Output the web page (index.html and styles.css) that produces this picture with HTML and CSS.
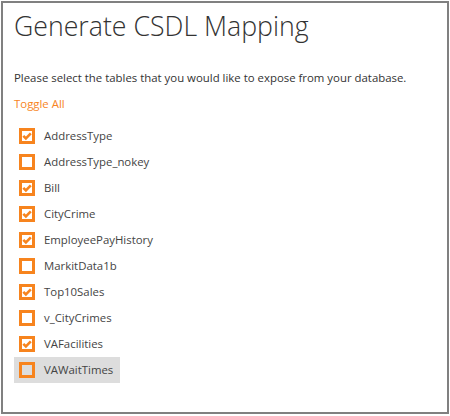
FILE: index.html
```html
<!DOCTYPE html>
<html>
<head>
<meta charset="utf-8">
<link rel="stylesheet" href="styles.css">
</head>
<body>
<div class="panel">
  <h1 class="title">Generate CSDL Mapping</h1>
  <p class="desc">Please select the tables that you would like to expose from your database.</p>
  <a class="toggle">Toggle All</a>
  <ul class="list">
    <li class="item"><span class="box"><svg class="check" viewBox="0 0 10 10"><polyline points="1.3,4.8 3.9,7.4 8.8,2.4"/></svg></span><span class="label">AddressType</span></li>
    <li class="item"><span class="box"></span><span class="label">AddressType_nokey</span></li>
    <li class="item"><span class="box"><svg class="check" viewBox="0 0 10 10"><polyline points="1.3,4.8 3.9,7.4 8.8,2.4"/></svg></span><span class="label">Bill</span></li>
    <li class="item"><span class="box"><svg class="check" viewBox="0 0 10 10"><polyline points="1.3,4.8 3.9,7.4 8.8,2.4"/></svg></span><span class="label">CityCrime</span></li>
    <li class="item"><span class="box"><svg class="check" viewBox="0 0 10 10"><polyline points="1.3,4.8 3.9,7.4 8.8,2.4"/></svg></span><span class="label">EmployeePayHistory</span></li>
    <li class="item"><span class="box"></span><span class="label">MarkitData1b</span></li>
    <li class="item"><span class="box"><svg class="check" viewBox="0 0 10 10"><polyline points="1.3,4.8 3.9,7.4 8.8,2.4"/></svg></span><span class="label">Top10Sales</span></li>
    <li class="item"><span class="box"></span><span class="label">v_CityCrimes</span></li>
    <li class="item"><span class="box"><svg class="check" viewBox="0 0 10 10"><polyline points="1.3,4.8 3.9,7.4 8.8,2.4"/></svg></span><span class="label">VAFacilities</span></li>
    <li class="item hover"><span class="box"></span><span class="label">VAWaitTimes</span></li>
  </ul>
</div>
</body>
</html>
```
FILE: styles.css
```css
html, body { margin: 0; padding: 0; background: #fff; }
body { font-family: "Open Sans", "Segoe UI", sans-serif; color: #333; }
.panel {
  margin: 1px;
  width: 448px;
  height: 413px;
  box-sizing: border-box;
  border: 2px solid #808080;
  padding: 0 11px;
}
.title {
  margin: 5px 0 0 0;
  font-weight: 300;
  font-size: 26.7px;
  line-height: 36px;
  color: #333;
}
.desc {
  margin: 26px 0 0 0;
  font-size: 11.4px;
  line-height: 16px;
  color: #333;
}
.toggle {
  display: block;
  margin-top: 10px;
  font-size: 11.4px;
  line-height: 16px;
  color: #f7841e;
}
.list { list-style: none; margin: 11px 0 0 0; padding: 0; }
.item {
  display: flex;
  align-items: center;
  gap: 9px;
  height: 26px;
  width: fit-content;
  padding: 0 7px 0 5px;
  font-size: 11.4px;
  color: #444;
}
.item.hover { background: #dddddd; }
.box {
  width: 16px;
  height: 16px;
  box-sizing: border-box;
  border: 3px solid #f7841e;
  display: flex;
}
.check {
  width: 10px;
  height: 10px;
  fill: none;
  stroke: #f7841e;
  stroke-width: 2.6;
}
.label { line-height: 16px; }
```
